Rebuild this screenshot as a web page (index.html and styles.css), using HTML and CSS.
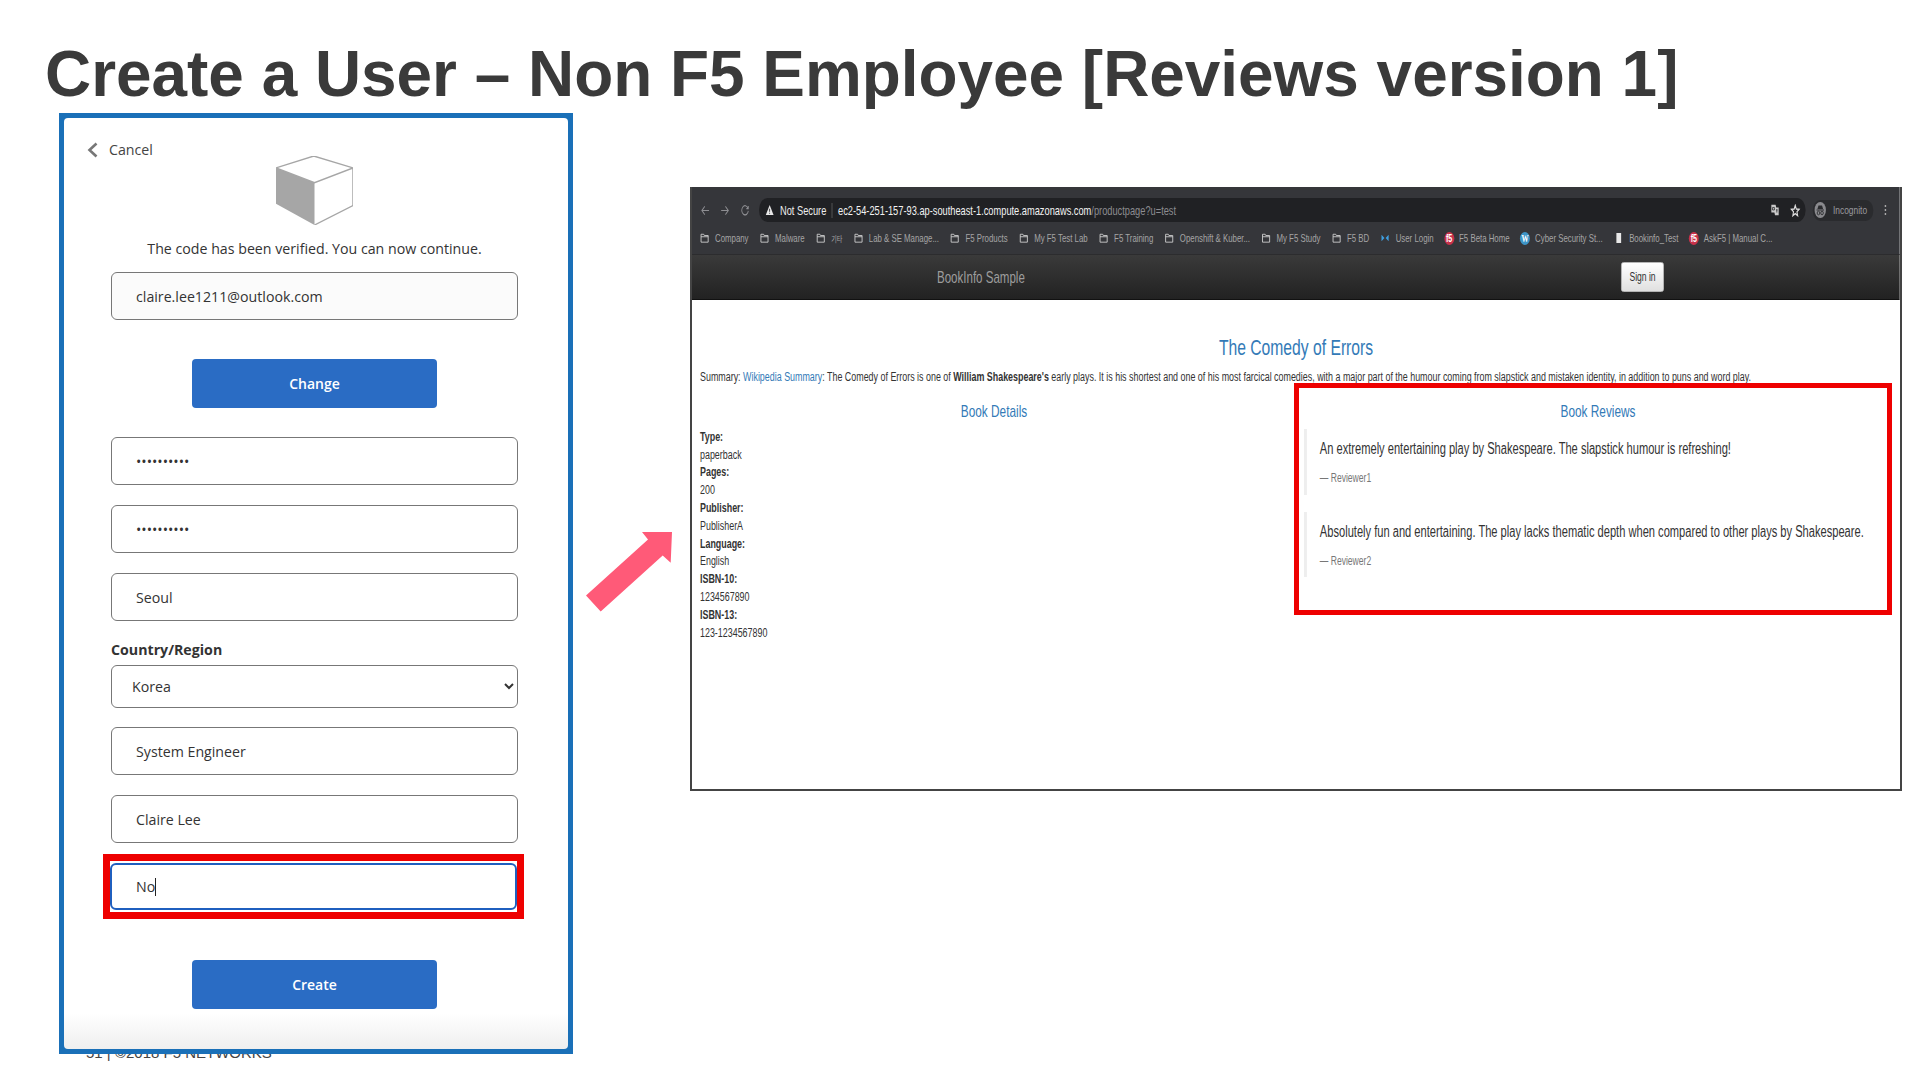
FILE: index.html
```html
<!DOCTYPE html>
<html lang="en">

<head>
    <meta charset="UTF-8">
    <title>Create a User - Non F5 Employee</title>
    <link rel="stylesheet" href="styles.css">
</head>

<body>
    <div class="slide">
        <h1>Create a User – Non F5 Employee [Reviews version 1]</h1>
        <div class="slide-footer">51 | ©2018 F5 NETWORKS</div>

        <div class="slide-row">
            <div class="signup-frame">
                <form class="signup">
                    <div class="cancel">
                        <svg class="cancel-icon" viewBox="0 0 11 16"><path d="M9.500 1.500 2.500 8l7 6.500" /></svg>
                        Cancel
                    </div>
                    <svg class="cube" viewBox="665 170 210 202" preserveAspectRatio="none">
                        <path class="cube-side" d="M665 205 770 248V372L665 310Z" />
                        <path class="cube-line" d="M768 170 875 205 770 248 665 205ZM875 205V315L770 372" />
                    </svg>
                    <p class="verified">The code has been verified. You can now continue.</p>
                    <input class="field field-readonly" type="text" value="claire.lee1211@outlook.com">
                    <button class="action action-change" type="button">Change</button>
                    <input class="field field-first" type="password" value="1234567890">
                    <input class="field" type="password" value="1234567890">
                    <input class="field" type="text" value="Seoul">
                    <label class="country-label" for="country">Country/Region</label>
                    <select class="country" id="country">
                        <option>Korea</option>
                    </select>
                    <input class="field field-job" type="text" value="System Engineer">
                    <input class="field" type="text" value="Claire Lee">
                    <div class="mark-field">
                        <div class="field field-focus">No<span class="caret"></span></div>
                    </div>
                    <button class="action action-create" type="button">Create</button>
                </form>
            </div>

            <svg class="arrow" viewBox="0 0 88 84">
                <path d="M87 2 57 2 63 9.500 1 65.500 15.700 81.500 77.700 25.500 85.700 32.800Z" />
            </svg>

            <div class="browser">
                <div class="browser-page">
                    <div class="toolbar">
                        <div class="nav-buttons">
                            <svg viewBox="0 0 14 12"><path d="M13 6H2M6.500 1.500 2 6l4.500 4.500" /></svg>
                            <svg viewBox="0 0 14 12"><path d="M1 6h11M7.500 1.500 12 6l-4.500 4.500" /></svg>
                            <svg viewBox="0 0 14 12"><path d="M11.500 3.500A5 5 0 1 0 12 6.500M12 1v3H9" /></svg>
                        </div>
                        <div class="address">
                            <svg class="warning" viewBox="0 0 12 11"><path d="M6 0 12 11H0Z" /><path class="warning-mark" d="M6 4v3.500M6 8.500v1" /></svg>
                            <span class="not-secure">Not Secure</span>
                            <span class="url"><b>ec2-54-251-157-93.ap-southeast-1.compute.amazonaws.com</b>/productpage?u=test</span>
                            <svg class="translate" viewBox="0 0 14 14"><path d="M1 1h7l1 3h4v9H7L6 10H1Z" /><path class="translate-mark" d="M3 4h3v3H3zM9 7h2M10 6v4" /></svg>
                            <svg class="star" viewBox="0 0 14 14"><path d="M7 1.500 8.600 5.400 12.800 5.700 9.600 8.400 10.600 12.500 7 10.300 3.400 12.500 4.400 8.400 1.200 5.700 5.400 5.400Z" /></svg>
                        </div>
                        <div class="incognito">
                            <svg viewBox="0 0 16 16"><circle class="incognito-bg" cx="8" cy="8" r="8" /><path class="incognito-hat" d="M4 7 5.500 3.500h5L12 7ZM2.800 7.500h10.400v1H2.800Z" /><circle class="incognito-eye" cx="5.500" cy="11" r="1.800" /><circle class="incognito-eye" cx="10.500" cy="11" r="1.800" /></svg>
                            Incognito
                        </div>
                        <div class="dots"><i></i><i></i><i></i></div>
                    </div>

                    <div class="bookmarks">
                        <span class="bookmark"><svg class="folder" viewBox="0 0 14 12"><path d="M1 1.500h4.500l1 1.500H13v8H1ZM1 4.500h12" /></svg>Company</span>
                        <span class="bookmark"><svg class="folder" viewBox="0 0 14 12"><path d="M1 1.500h4.500l1 1.500H13v8H1ZM1 4.500h12" /></svg>Malware</span>
                        <span class="bookmark bookmark-ko"><svg class="folder" viewBox="0 0 14 12"><path d="M1 1.500h4.500l1 1.500H13v8H1ZM1 4.500h12" /></svg>기타</span>
                        <span class="bookmark"><svg class="folder" viewBox="0 0 14 12"><path d="M1 1.500h4.500l1 1.500H13v8H1ZM1 4.500h12" /></svg>Lab &amp; SE Manage...</span>
                        <span class="bookmark"><svg class="folder" viewBox="0 0 14 12"><path d="M1 1.500h4.500l1 1.500H13v8H1ZM1 4.500h12" /></svg>F5 Products</span>
                        <span class="bookmark"><svg class="folder" viewBox="0 0 14 12"><path d="M1 1.500h4.500l1 1.500H13v8H1ZM1 4.500h12" /></svg>My F5 Test Lab</span>
                        <span class="bookmark"><svg class="folder" viewBox="0 0 14 12"><path d="M1 1.500h4.500l1 1.500H13v8H1ZM1 4.500h12" /></svg>F5 Training</span>
                        <span class="bookmark"><svg class="folder" viewBox="0 0 14 12"><path d="M1 1.500h4.500l1 1.500H13v8H1ZM1 4.500h12" /></svg>Openshift &amp; Kuber...</span>
                        <span class="bookmark"><svg class="folder" viewBox="0 0 14 12"><path d="M1 1.500h4.500l1 1.500H13v8H1ZM1 4.500h12" /></svg>My F5 Study</span>
                        <span class="bookmark"><svg class="folder" viewBox="0 0 14 12"><path d="M1 1.500h4.500l1 1.500H13v8H1ZM1 4.500h12" /></svg>F5 BD</span>
                        <span class="bookmark"><svg class="favicon" viewBox="0 0 14 12"><path class="fav-login" d="M1 2 6 6 1 10ZM13 2 8 6l5 4Z" /></svg>User Login</span>
                        <span class="bookmark"><span class="fav-round fav-f5">f5</span>F5 Beta Home</span>
                        <span class="bookmark"><span class="fav-round fav-wp">W</span>Cyber Security St...</span>
                        <span class="bookmark"><svg class="favicon" viewBox="0 0 14 12"><path class="fav-doc" d="M3 0h8v12H3Z" /></svg>Bookinfo_Test</span>
                        <span class="bookmark"><span class="fav-round fav-f5">f5</span>AskF5 | Manual C...</span>
                    </div>

                    <div class="navbar">
                        <span class="brand">BookInfo Sample</span>
                        <button class="sign-in" type="button">Sign in</button>
                    </div>

                    <div class="content">
                        <h3 class="book-title">The Comedy of Errors</h3>
                        <p class="summary">Summary: <a href="#">Wikipedia Summary</a>: The Comedy of Errors is one of <b>William Shakespeare's</b> early plays. It is his shortest and one of his most farcical comedies, with a major part of the humour coming from slapstick and mistaken identity, in addition to puns and word play.</p>
                        <div class="columns">
                            <div class="column">
                                <h4 class="column-title">Book Details</h4>
                                <dl class="details">
                                    <dt>Type:</dt>
                                    <dd>paperback</dd>
                                    <dt>Pages:</dt>
                                    <dd>200</dd>
                                    <dt>Publisher:</dt>
                                    <dd>PublisherA</dd>
                                    <dt>Language:</dt>
                                    <dd>English</dd>
                                    <dt>ISBN-10:</dt>
                                    <dd>1234567890</dd>
                                    <dt>ISBN-13:</dt>
                                    <dd>123-1234567890</dd>
                                </dl>
                            </div>
                            <div class="column">
                                <h4 class="column-title">Book Reviews</h4>
                                <blockquote class="review">
                                    <p>An extremely entertaining play by Shakespeare. The slapstick humour is refreshing!</p>
                                    <small>— Reviewer1</small>
                                </blockquote>
                                <blockquote class="review">
                                    <p>Absolutely fun and entertaining. The play lacks thematic depth when compared to other plays by Shakespeare.</p>
                                    <small>— Reviewer2</small>
                                </blockquote>
                            </div>
                        </div>
                    </div>
                </div>
                <div class="mark-reviews"></div>
            </div>
        </div>
    </div>
</body>

</html>
```

FILE: styles.css
```css
body {
    margin: 0;
    background: #fff;
    font-family: "Liberation Sans", Arial, sans-serif;
    overflow: hidden;
}

.slide {
    position: relative;
    width: 1920px;
    height: 1080px;
    overflow: hidden;
}

h1 {
    margin: 0;
    padding: 37px 0 0 45px;
    height: 113px;
    box-sizing: border-box;
    font-size: 63.900px;
    line-height: 74px;
    font-weight: bold;
    color: #3a3a3a;
    white-space: nowrap;
}

.slide-footer {
    position: absolute;
    left: 86px;
    top: 1044px;
    font-size: 15px;
    line-height: 18px;
    color: #444;
}

.slide-row {
    display: flex;
    align-items: flex-start;
    padding-left: 59px;
}

/* sign up form */
.signup-frame {
    position: relative;
    width: 514px;
    height: 941px;
    box-sizing: border-box;
    padding: 5px;
    background: #1a70b8;
}

.signup {
    display: flex;
    flex-direction: column;
    align-items: center;
    height: 100%;
    padding: 25px 3px 0 0;
    box-sizing: border-box;
    border-radius: 4px;
    background: linear-gradient(#fff 895px, #efefef);
    font-family: "Open Sans", sans-serif;
    font-size: 14.200px;
    color: #333;
}

.cancel {
    align-self: flex-start;
    display: flex;
    align-items: center;
    gap: 11px;
    height: 13px;
    margin-left: 23px;
    color: #444;
}

.cancel-icon {
    width: 11px;
    height: 16px;
    fill: none;
    stroke: #777;
    stroke-width: 2.600;
}

.cube {
    width: 77px;
    height: 69px;
    flex: none;
}

.cube-side {
    fill: #a6a6a6;
}

.cube-line {
    fill: none;
    stroke: #a6a6a6;
    stroke-width: 4;
}

.verified {
    margin: 15px 0 0;
    line-height: 18px;
}

.field {
    display: block;
    width: 407px;
    height: 48px;
    margin: 20px 0 0;
    padding: 0 24px;
    box-sizing: border-box;
    border: 1.500px solid #777;
    border-radius: 6px;
    background: #fff;
    font: inherit;
    color: #333;
    outline: none;
}

.field-readonly {
    margin-top: 14px;
    background: #fbfbfb;
}

.field-first {
    margin-top: 29px;
}

.field-job {
    margin-top: 19px;
}

.action {
    width: 245px;
    height: 49px;
    border: 0;
    border-radius: 4px;
    background: #2a6cc4;
    font: 600 14px "Open Sans", sans-serif;
    color: #fff;
}

.action-change {
    margin-top: 39px;
}

.action-create {
    margin-top: 41px;
}

.country-label {
    align-self: flex-start;
    margin: 20px 0 0 47px;
    line-height: 18px;
    font-weight: 700;
}

.country {
    width: 407px;
    height: 43px;
    margin-top: 6px;
    padding: 0 16px;
    box-sizing: border-box;
    border: 1.500px solid #777;
    border-radius: 6px;
    background: #fff;
    font: inherit;
    color: #333;
}

.mark-field {
    margin: 11px 2px 0 0;
    padding: 2px 0;
    border: 7px solid #ee0000;
}

.field-focus {
    display: flex;
    align-items: center;
    height: 47px;
    margin: 0;
    border: 2px solid #1f5fbf;
}

.caret {
    width: 1px;
    height: 18px;
    background: #222;
}

.arrow {
    position: absolute;
    left: 585px;
    top: 530px;
    width: 88px;
    height: 84px;
    fill: #ff5a78;
}

/* browser screenshot, squeezed sideways as in the slide */
.browser {
    --k: 0.7125;
    position: relative;
    flex: none;
    width: 1212px;
    height: 604px;
    margin: 74px 0 0 117px;
    box-sizing: border-box;
    border: 2px solid #444;
    border-top: 0;
}

.browser-page {
    width: calc(100% / var(--k));
    height: 100%;
    transform: scaleX(var(--k));
    transform-origin: left top;
}

.toolbar {
    display: flex;
    align-items: center;
    height: 35px;
    box-sizing: border-box;
    padding: 11px 0 0 calc(7px / var(--k));
    background: #35363a;
}

.nav-buttons {
    display: flex;
    gap: calc(8px / var(--k));
    width: calc(60px / var(--k));
}

.nav-buttons svg {
    width: calc(12px / var(--k));
    height: 11px;
    fill: none;
    stroke: #8e8e92;
    stroke-width: 1.300;
}

.address {
    display: flex;
    align-items: center;
    width: calc(1047px / var(--k));
    height: 24px;
    border-radius: 12px;
    background: #202124;
    font-size: 13px;
}

.warning {
    width: calc(10px / var(--k));
    height: 10px;
    margin-left: calc(6px / var(--k));
    fill: #e8e8e8;
}

.warning-mark {
    fill: none;
    stroke: #202124;
    stroke-width: 1.200;
}

.not-secure {
    margin-left: calc(5px / var(--k));
    padding-right: calc(5px / var(--k));
    border-right: 1px solid #666;
    color: #eee;
}

.url {
    flex: 1;
    margin-left: calc(6px / var(--k));
    color: #8c8c90;
}

.url b {
    font-weight: normal;
    color: #f2f2f2;
}

.translate {
    width: calc(10px / var(--k));
    height: 12px;
    fill: #c9c9c9;
}

.translate-mark {
    fill: none;
    stroke: #202124;
}

.star {
    width: calc(12px / var(--k));
    height: 13px;
    margin: 0 calc(5px / var(--k)) 0 calc(9px / var(--k));
    fill: none;
    stroke: #ddd;
    stroke-width: 1.600;
}

.incognito {
    display: flex;
    align-items: center;
    gap: calc(5px / var(--k));
    width: calc(60px / var(--k));
    height: 21px;
    margin-left: calc(7px / var(--k));
    border-radius: 11px;
    background: #2a2b2e;
    font-size: 11.800px;
    color: #9a9a9e;
}

.incognito svg {
    width: calc(15px / var(--k));
    height: 16px;
}

.incognito-bg {
    fill: #8a8a8e;
}

.incognito-hat {
    fill: #2a2b2e;
}

.incognito-eye {
    fill: none;
    stroke: #2a2b2e;
}

.dots {
    display: flex;
    flex-direction: column;
    gap: 2px;
    margin-left: calc(12px / var(--k));
}

.dots i {
    width: 2px;
    height: 2px;
    background: #aaa;
}

.bookmarks {
    display: flex;
    align-items: center;
    gap: calc(10.500px / var(--k));
    height: 33px;
    padding-left: calc(7px / var(--k));
    border-bottom: 1px solid #2c2c2e;
    box-sizing: border-box;
    background: #35363a;
    font-family: "Liberation Sans", "Noto Sans CJK KR", sans-serif;
    font-size: 11px;
    color: #a5a5a5;
}

.bookmark {
    display: flex;
    align-items: center;
    gap: calc(5px / var(--k));
    white-space: nowrap;
}

.bookmark-ko {
    font-size: 8.500px;
}

.folder {
    width: calc(11px / var(--k));
    height: 10px;
    fill: none;
    stroke: #d4d4d4;
    stroke-width: 1.200;
}

.favicon {
    width: calc(11px / var(--k));
    height: 10px;
}

.fav-login {
    fill: #3f9fe0;
}

.fav-doc {
    fill: #e8e8e8;
}

.fav-round {
    display: flex;
    align-items: center;
    justify-content: center;
    width: calc(10px / var(--k));
    height: 13px;
    border-radius: 50%;
    font-size: 10px;
    font-weight: bold;
    color: #fff;
}

.fav-f5 {
    background: #c8314a;
}

.fav-wp {
    background: #3d94c6;
    font-family: "Liberation Serif", serif;
}

.navbar {
    display: flex;
    align-items: center;
    justify-content: space-between;
    height: 45px;
    padding: 0 calc(236px / var(--k)) 0 calc(245px / var(--k));
    border-bottom: 1px solid #111;
    box-sizing: border-box;
    background: linear-gradient(#3a3a3a, #222);
}

.brand {
    font-size: 16.200px;
    color: #9d9d9d;
}

.sign-in {
    width: calc(43px / var(--k));
    height: 30px;
    padding: 0;
    border: 1px solid #ccc;
    border-radius: 3px;
    background: linear-gradient(#fff, #e0e0e0);
    font: 12px "Liberation Sans", sans-serif;
    color: #333;
}

.content {
    height: 489px;
    background: #fff;
    font-size: 12.500px;
    line-height: 17.800px;
    color: #333;
}

a,
.book-title,
.column-title {
    color: #337ab7;
    text-decoration: none;
}

.book-title {
    margin: 0;
    padding-top: 35px;
    font-size: 22px;
    font-weight: normal;
    line-height: 26px;
    text-align: center;
}

.summary {
    margin: 8px 0 0;
    padding-left: calc(8px / var(--k));
    white-space: nowrap;
}

.columns {
    display: grid;
    grid-template-columns: 1fr 1fr;
}

.column-title {
    margin: 15px 0 7px;
    font-size: 16.600px;
    font-weight: normal;
    line-height: 20px;
    text-align: center;
}

.details {
    margin: 0;
    padding-left: calc(8px / var(--k));
}

.details dt {
    font-weight: bold;
}

.details dd {
    margin: 0;
}

.review {
    margin: 0 0 17px calc(8px / var(--k));
    padding: 9px 0 7px calc(13px / var(--k));
    border-left: calc(3px / var(--k)) solid #eee;
    font-size: 15.600px;
}

.review p {
    margin: 0 0 10px;
    line-height: 22px;
    white-space: nowrap;
}

.review small {
    display: block;
    font-size: 12px;
    color: #777;
}

.mark-reviews {
    position: absolute;
    left: 602px;
    top: 196px;
    width: 598px;
    height: 232px;
    box-sizing: border-box;
    border: 5px solid #ee0000;
}
```
